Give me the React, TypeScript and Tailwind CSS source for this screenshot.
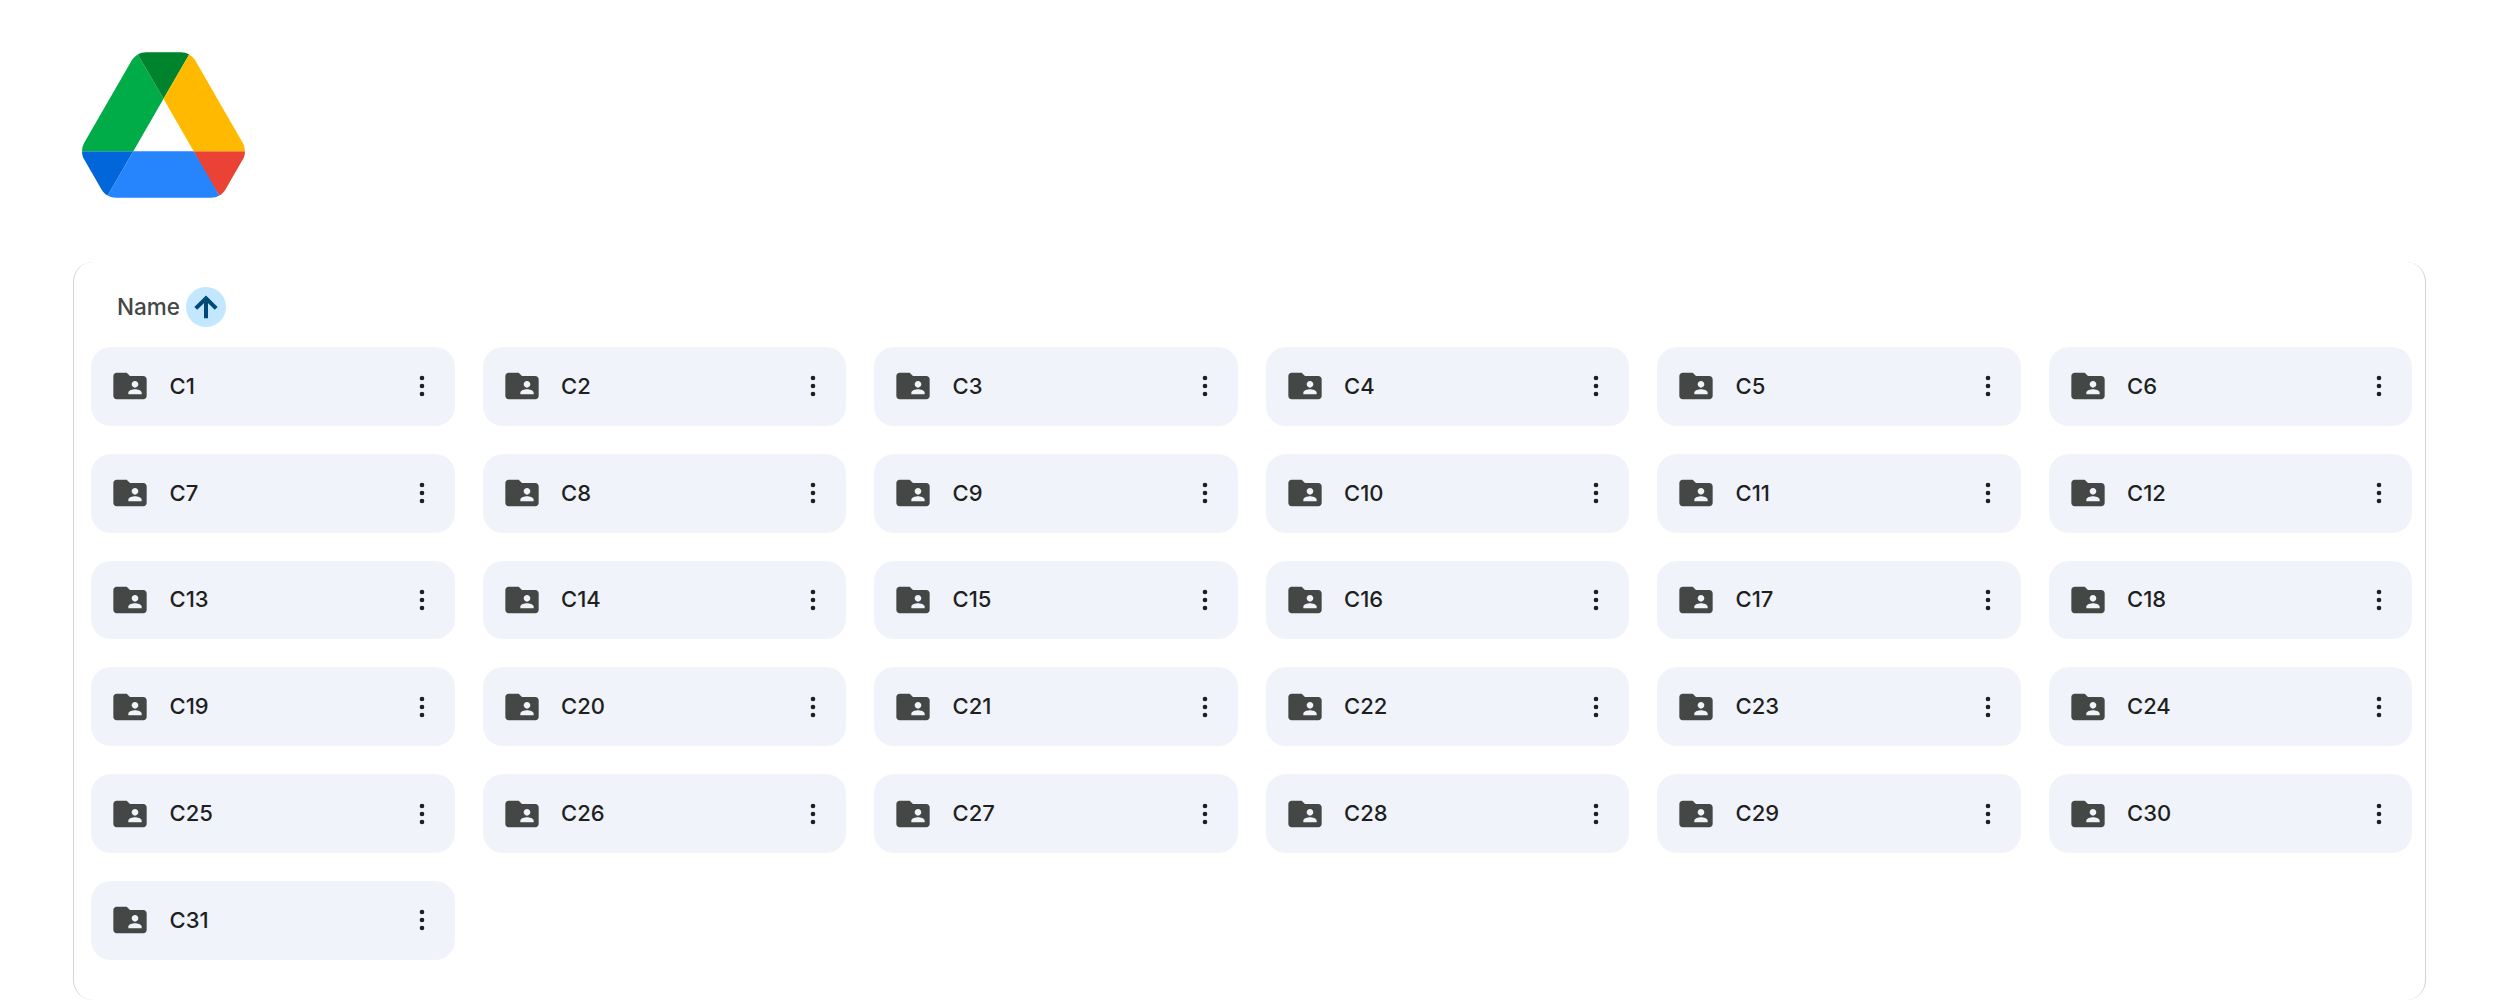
const folders = Array.from({ length: 31 }, (_, i) => `C${i + 1}`);

function DriveLogo() {
  return (
    <svg viewBox="0 0 87.3 78" className="block w-[163px] h-[146px]">
      <path d="m6.6 66.85 3.85 6.65c.8 1.4 1.95 2.5 3.3 3.3l13.75-23.8h-27.5c0 1.55.4 3.1 1.2 4.5z" fill="#0066da" />
      <path d="m43.65 25-13.75-23.8c-1.35.8-2.5 1.9-3.3 3.3l-25.4 44a9.06 9.06 0 0 0 -1.2 4.5h27.5z" fill="#00ac47" />
      <path d="m73.55 76.8c1.35-.8 2.5-1.9 3.3-3.3l1.6-2.75 7.65-13.25c.8-1.4 1.2-2.95 1.2-4.5h-27.502l5.852 11.5z" fill="#ea4335" />
      <path d="m43.65 25 13.75-23.8c-1.35-.8-2.9-1.2-4.5-1.2h-18.5c-1.6 0-3.15.45-4.5 1.2z" fill="#00832d" />
      <path d="m59.8 53h-32.3l-13.75 23.8c1.35.8 2.9 1.2 4.5 1.2h50.8c1.6 0 3.15-.45 4.5-1.2z" fill="#2684fc" />
      <path d="m73.4 26.5-12.7-22c-.8-1.4-1.95-2.5-3.3-3.3l-13.75 23.8 16.15 28h27.45c0-1.55-.4-3.1-1.2-4.5z" fill="#ffba00" />
    </svg>
  );
}

function FolderCard({ name }: { name: string }) {
  return (
    <div className="h-[78.8px] rounded-[20px] bg-[#f0f4fa] flex items-center pl-[19px] pr-[17px]">
      <svg viewBox="0 0 24 24" className="w-[40px] h-[40px] shrink-0" fill="#444746">
        <path d="M20 6h-8l-2-2H4c-1.1 0-1.99.9-1.99 2L2 18c0 1.1.9 2 2 2h16c1.1 0 2-.9 2-2V8c0-1.1-.9-2-2-2zm-5 3c1.1 0 2 .9 2 2s-.9 2-2 2-2-.9-2-2 .9-2 2-2zm4 8h-8v-1c0-1.33 2.67-2 4-2s4 .67 4 2v1z" />
      </svg>
      <span className="ml-[19.5px] flex-1 text-[22px] font-[450] text-[#1f1f1f]">{name}</span>
      <svg viewBox="0 0 24 24" className="w-[32px] h-[32px] shrink-0" fill="#1f1f1f">
        <circle cx="12" cy="6" r="1.75" />
        <circle cx="12" cy="12" r="1.75" />
        <circle cx="12" cy="18" r="1.75" />
      </svg>
    </div>
  );
}

export default function App() {
  return (
    <div className="h-[1000px] overflow-hidden bg-white font-['Inter',sans-serif]">
      <div className="pt-[52px] pl-[82px]">
        <DriveLogo />
      </div>
      <div className="mt-[64px] ml-[73px] mr-[74px] h-[738px] rounded-[20px] border-x border-[#d3d3d3] pl-[17px] pr-[13px]">
        <div className="h-[85px] flex items-start pt-[25px] pl-[26px]">
          <span className="text-[22.5px] leading-[40px] font-[450] text-[#444746]">Name</span>
          <span className="ml-[6px] w-[40px] h-[40px] rounded-full bg-[#c2e7ff] flex items-center justify-center">
            <svg viewBox="0 0 24 24" className="w-[32px] h-[32px]" fill="#004a77" stroke="#004a77" strokeWidth="1">
              <path d="M4 12l1.41 1.41L11 7.83V20h2V7.83l5.58 5.59L20 12l-8-8-8 8z" />
            </svg>
          </span>
        </div>
        <div className="grid grid-cols-6 gap-[28px]">
          {folders.map((f) => (
            <FolderCard key={f} name={f} />
          ))}
        </div>
      </div>
    </div>
  );
}
